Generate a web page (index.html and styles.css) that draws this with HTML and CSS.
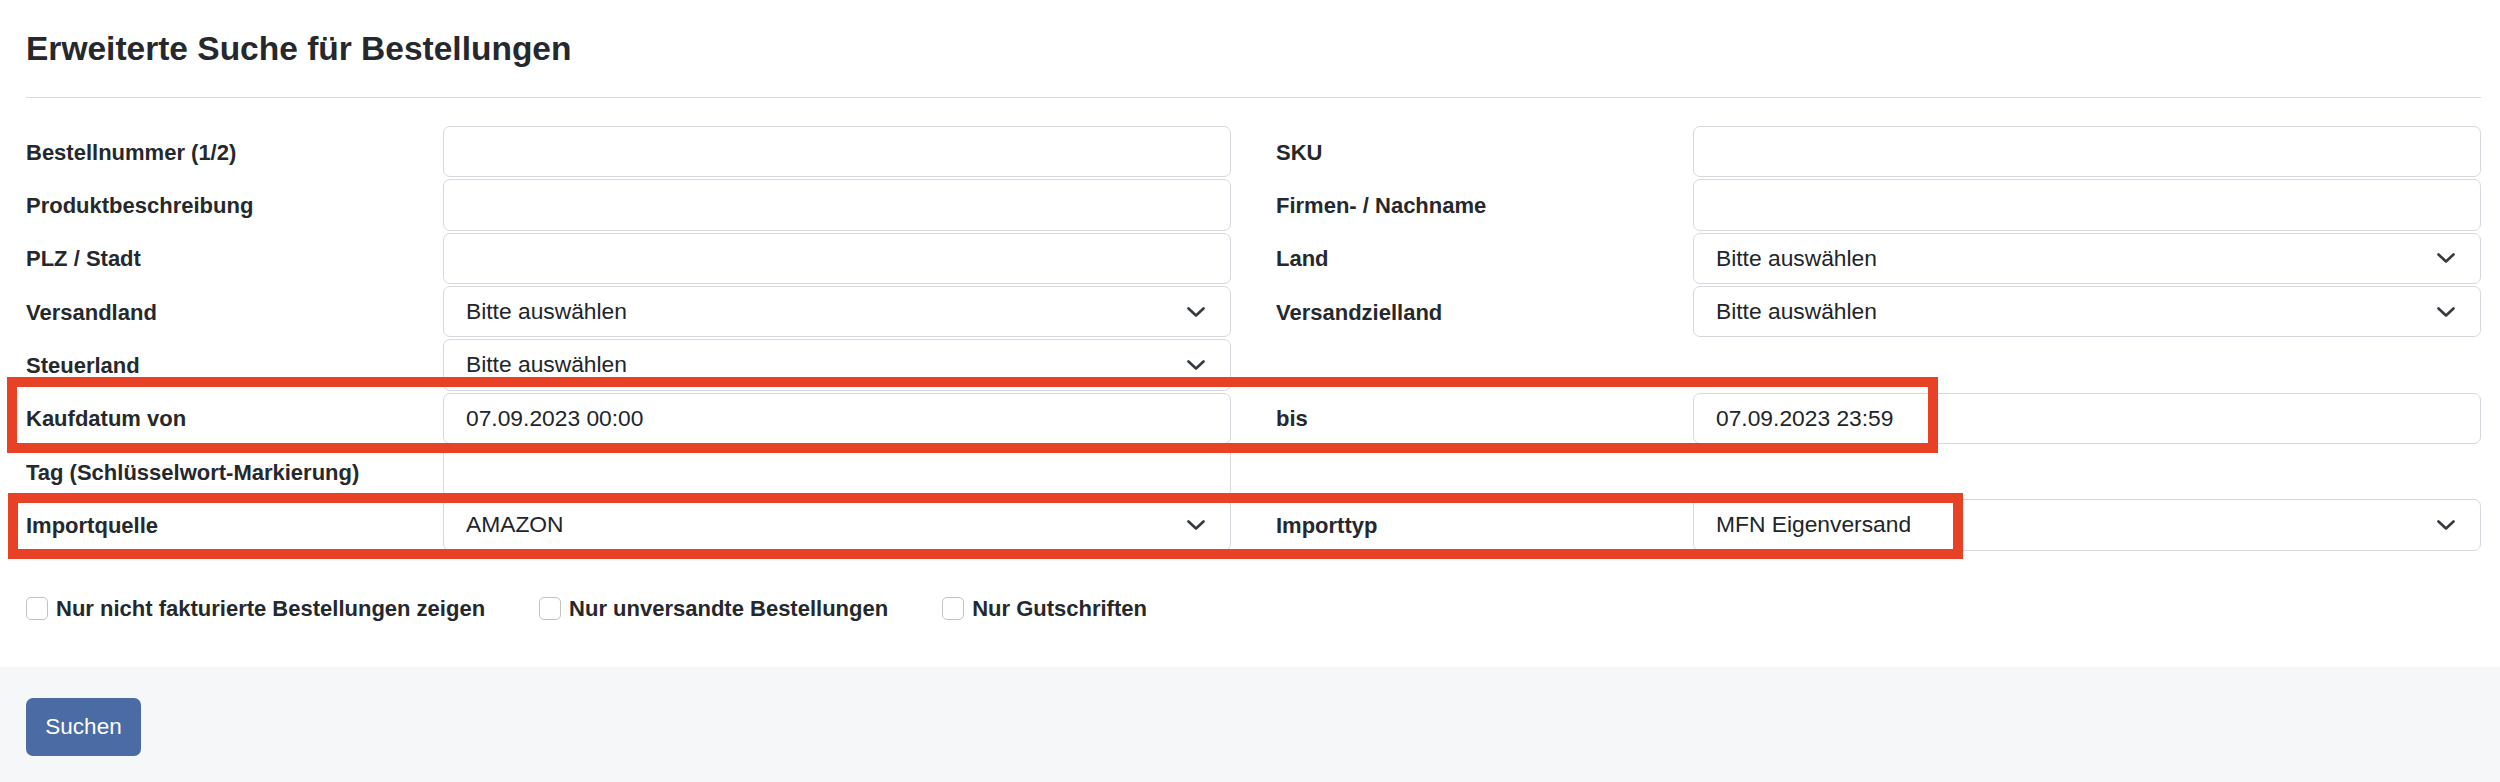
FILE: index.html
```html
<!DOCTYPE html>
<html lang="de">
<head>
<meta charset="utf-8">
<title>Erweiterte Suche für Bestellungen</title>
<link rel="stylesheet" href="styles.css">
</head>
<body>
<div class="page">
  <main class="main">
    <h1 class="title">Erweiterte Suche für Bestellungen</h1>
    <hr class="divider">
    <form class="form-grid">
      <label class="lbl">Bestellnummer (1/2)</label>
      <input class="ctl" type="text">
      <label class="lbl">SKU</label>
      <input class="ctl" type="text">

      <label class="lbl">Produktbeschreibung</label>
      <input class="ctl" type="text">
      <label class="lbl">Firmen- / Nachname</label>
      <input class="ctl" type="text">

      <label class="lbl">PLZ / Stadt</label>
      <input class="ctl" type="text">
      <label class="lbl">Land</label>
      <div class="ctl sel"><span>Bitte auswählen</span><svg class="chev" viewBox="0 0 18 10" width="18" height="10"><polyline points="1.5,1.5 9,8.5 16.5,1.5"/></svg></div>

      <label class="lbl">Versandland</label>
      <div class="ctl sel"><span>Bitte auswählen</span><svg class="chev" viewBox="0 0 18 10" width="18" height="10"><polyline points="1.5,1.5 9,8.5 16.5,1.5"/></svg></div>
      <label class="lbl">Versandzielland</label>
      <div class="ctl sel"><span>Bitte auswählen</span><svg class="chev" viewBox="0 0 18 10" width="18" height="10"><polyline points="1.5,1.5 9,8.5 16.5,1.5"/></svg></div>

      <label class="lbl">Steuerland</label>
      <div class="ctl sel"><span>Bitte auswählen</span><svg class="chev" viewBox="0 0 18 10" width="18" height="10"><polyline points="1.5,1.5 9,8.5 16.5,1.5"/></svg></div>
      <div class="empty"></div>
      <div class="empty"></div>

      <label class="lbl">Kaufdatum von</label>
      <input class="ctl" type="text" value="07.09.2023 00:00">
      <label class="lbl">bis</label>
      <input class="ctl" type="text" value="07.09.2023 23:59">

      <label class="lbl">Tag (Schlüsselwort-Markierung)</label>
      <div class="ctl tag"></div>
      <div class="empty"></div>
      <div class="empty"></div>

      <label class="lbl">Importquelle</label>
      <div class="ctl sel"><span>AMAZON</span><svg class="chev" viewBox="0 0 18 10" width="18" height="10"><polyline points="1.5,1.5 9,8.5 16.5,1.5"/></svg></div>
      <label class="lbl">Importtyp</label>
      <div class="ctl sel"><span>MFN Eigenversand</span><svg class="chev" viewBox="0 0 18 10" width="18" height="10"><polyline points="1.5,1.5 9,8.5 16.5,1.5"/></svg></div>
    </form>

    <div class="checks">
      <label class="chk"><span class="box"></span>Nur nicht fakturierte Bestellungen zeigen</label>
      <label class="chk"><span class="box"></span>Nur unversandte Bestellungen</label>
      <label class="chk"><span class="box"></span>Nur Gutschriften</label>
    </div>
  </main>
  <footer class="footer">
    <button class="btn" type="button">Suchen</button>
  </footer>
  <div class="mark mark-date"></div>
  <div class="mark mark-import"></div>
</div>
</body>
</html>
```

FILE: styles.css
```css
html, body {
  margin: 0;
  padding: 0;
  background: #ffffff;
}
body {
  font-family: "Liberation Sans", Arial, Helvetica, sans-serif;
  color: #212529;
}
.page {
  position: relative;
  width: 2500px;
  height: 782px;
  overflow: hidden;
}
.main {
  padding: 0 19px 0 26px;
}
.title {
  margin: 0;
  padding-top: 29px;
  font-size: 33.5px;
  line-height: 40px;
  font-weight: 700;
  color: #25282c;
  letter-spacing: 0;
}
.divider {
  margin: 28px 0 0 0;
  border: 0;
  border-top: 1.5px solid #d9dbde;
  height: 0;
}
.form-grid {
  margin-top: 28px;
  display: grid;
  grid-template-columns: 372px 1fr 372px 1fr;
  grid-auto-rows: 51.33px;
  column-gap: 45px;
  row-gap: 2px;
}
.lbl {
  display: flex;
  align-items: center;
  padding-top: 2px;
  font-size: 22px;
  font-weight: 700;
  color: #25282c;
  white-space: nowrap;
}
.ctl {
  box-sizing: border-box;
  height: 51.33px;
  width: 100%;
  margin: 0;
  border: 1.5px solid #d5d9de;
  border-radius: 7px;
  padding: 0 22px;
  font-family: "Liberation Sans", Arial, Helvetica, sans-serif;
  font-size: 22.8px;
  color: #212529;
  background: #ffffff;
  outline: none;
}
.sel {
  display: flex;
  align-items: center;
  justify-content: space-between;
  padding-right: 25px;
}
.chev {
  display: block;
  fill: none;
  stroke: #343a40;
  stroke-width: 2.6;
  stroke-linecap: round;
  stroke-linejoin: round;
}
.tag {
  border: 1px solid #dcdcdc;
}
.checks {
  margin-top: 46px;
  display: flex;
  align-items: center;
  gap: 54px;
  height: 24px;
}
.chk {
  display: flex;
  align-items: center;
  gap: 8px;
  font-size: 22px;
  font-weight: 700;
  color: #25282c;
  white-space: nowrap;
}
.box {
  box-sizing: border-box;
  width: 22px;
  height: 23px;
  border: 1.5px solid #bfc3c8;
  border-radius: 5px;
  background: #fff;
}
.footer {
  margin-top: 46px;
  background: #f6f7f9;
  padding: 31px 26px 27px;
  height: 116px;
  box-sizing: border-box;
}
.btn {
  display: block;
  height: 58px;
  width: 115px;
  border: 0;
  border-radius: 7px;
  background: #4b6ba4;
  color: #ffffff;
  font-family: "Liberation Sans", Arial, Helvetica, sans-serif;
  font-size: 22.5px;
  padding: 0;
}
.mark {
  position: absolute;
  box-sizing: border-box;
  border: 10px solid #e84226;
}
.mark-date {
  left: 7px;
  top: 377px;
  width: 1931px;
  height: 76px;
}
.mark-import {
  left: 8px;
  top: 493px;
  width: 1955px;
  height: 66px;
}
```
